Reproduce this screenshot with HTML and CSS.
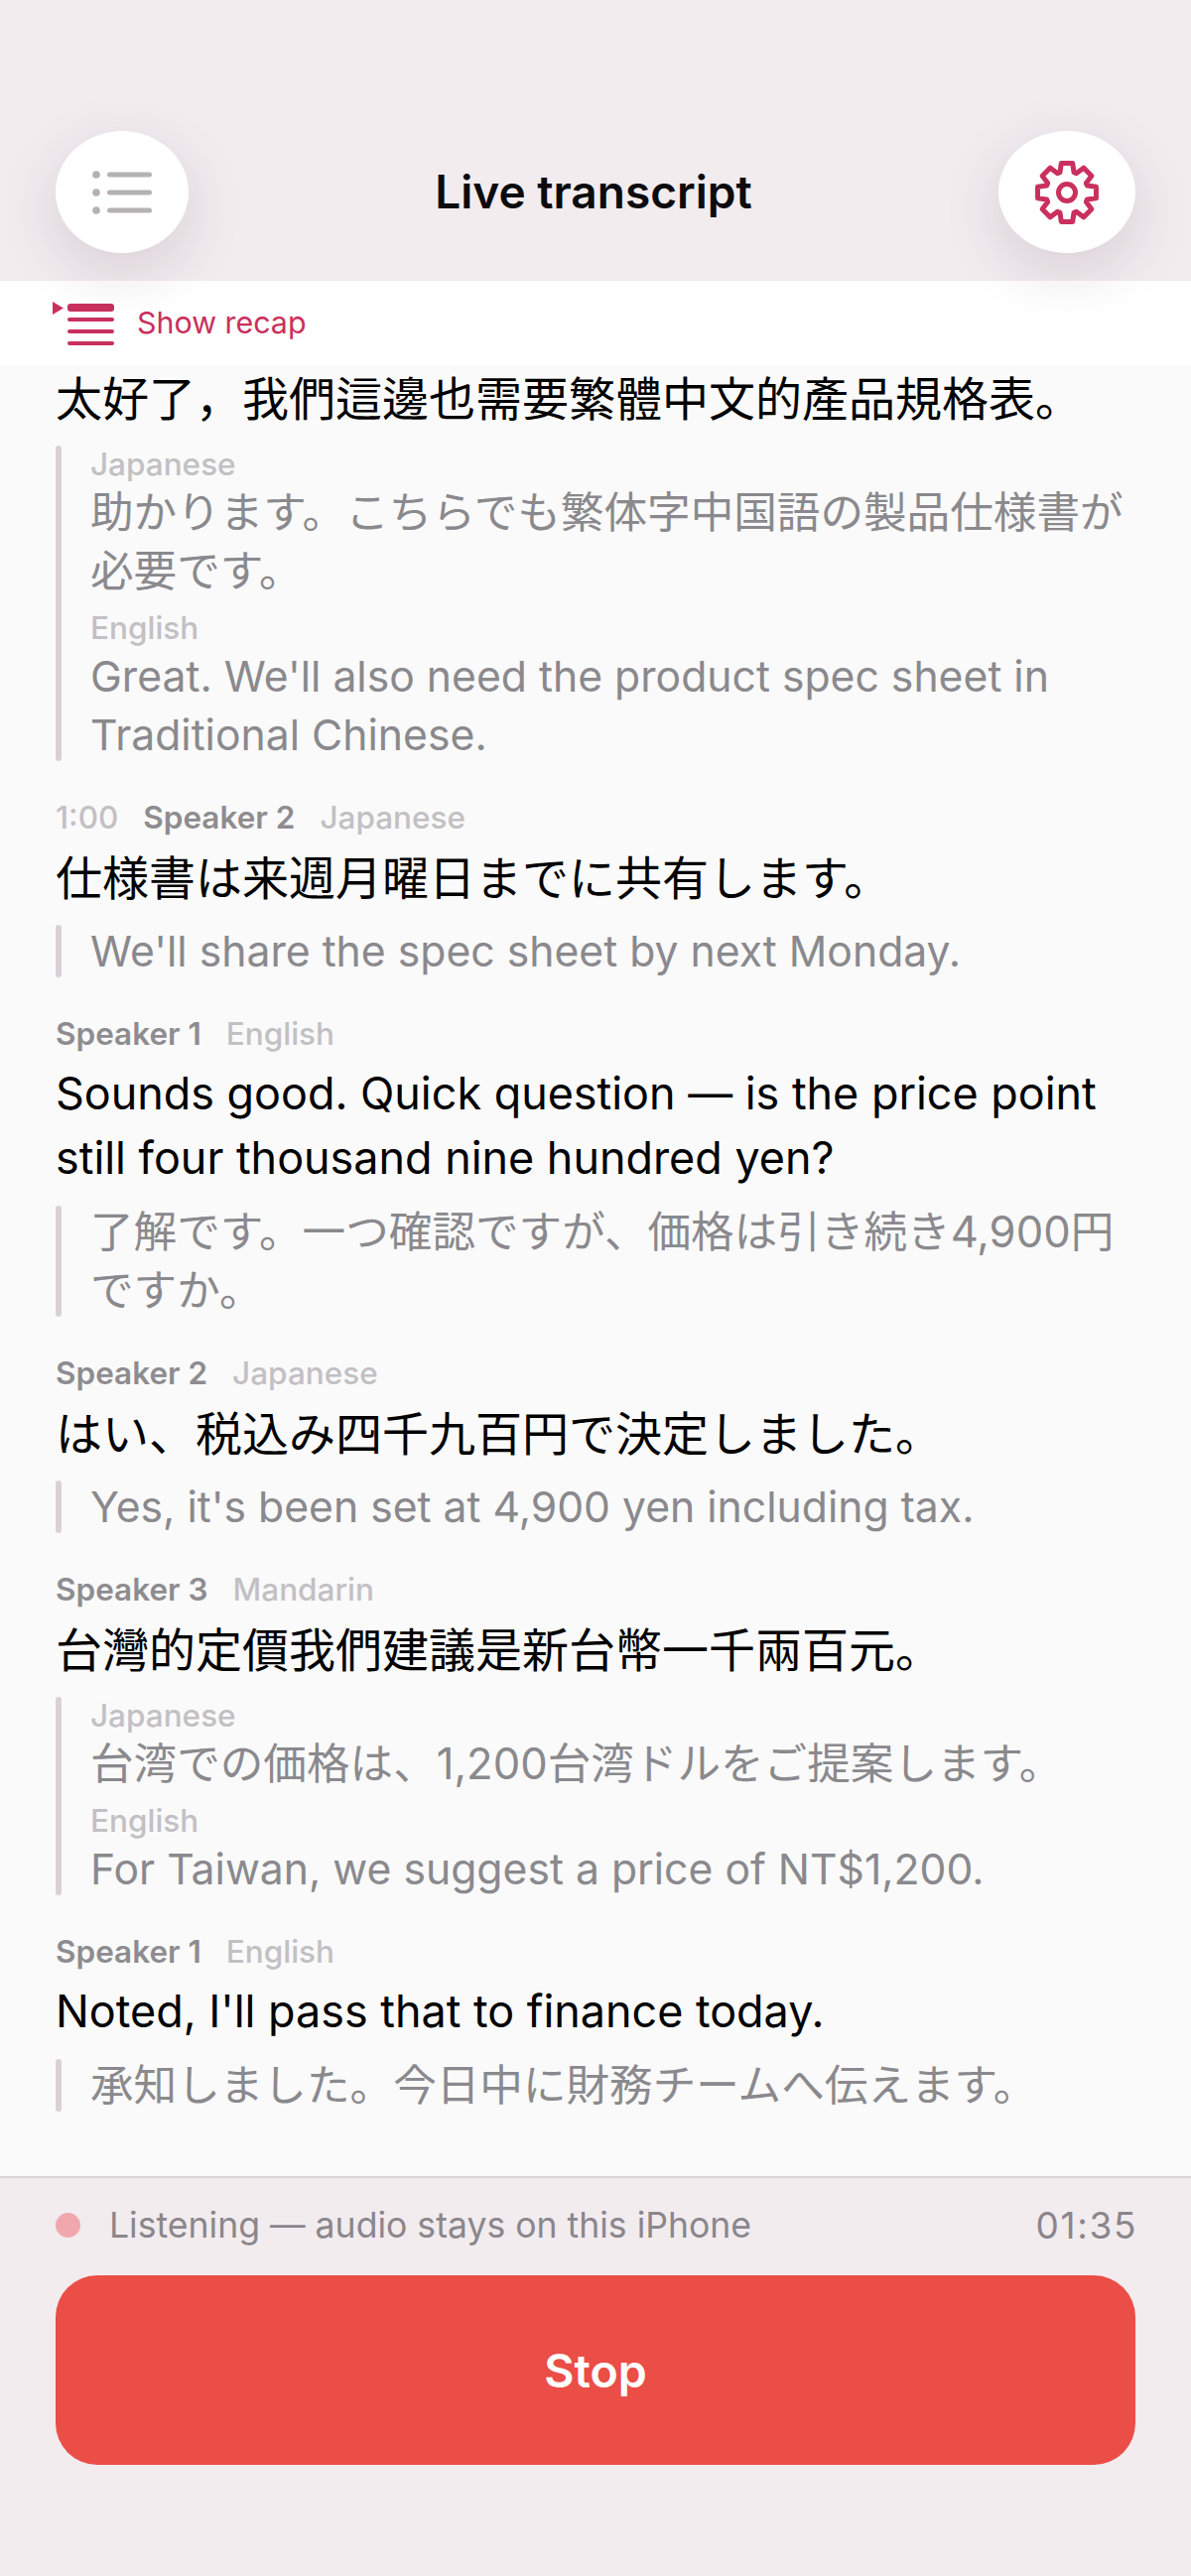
FILE: index.html
```html
<!DOCTYPE html>
<html lang="en">
<head>
    <meta charset="UTF-8">
    <meta name="viewport" content="width=device-width, initial-scale=1.0">
    <title>Live transcript</title>
    <link rel="stylesheet" href="styles.css">
</head>
<body>

    <header class="top-bar">
        <button class="round-button" aria-label="Sessions">
            <svg class="list-icon" viewBox="0 0 60 46" width="60" height="46">
                <circle cx="4" cy="5" r="3.8"/>
                <circle cx="4" cy="23" r="3.8"/>
                <circle cx="4" cy="41" r="3.8"/>
                <rect x="15" y="2.5" width="45" height="5" rx="2.5"/>
                <rect x="15" y="20.5" width="45" height="5" rx="2.5"/>
                <rect x="15" y="38.5" width="45" height="5" rx="2.5"/>
            </svg>
        </button>
        <h1>Live transcript</h1>
        <button class="round-button settings" aria-label="Settings">
            <svg class="gear-icon" viewBox="0 0 66 66" width="66" height="66">
                <path d="M26 12.67 27.28 3.55H38.72L40 12.67 42.43 13.67 49.78 8.13 57.87 16.22 52.33 23.57 53.33 26 62.45 27.28V38.72L53.33 40 52.33 42.43 57.87 49.78 49.78 57.87 42.43 52.33 40 53.33 38.72 62.45H27.28L26 53.33 23.57 52.33 16.22 57.87 8.13 49.78 13.67 42.43 12.67 40 3.55 38.72V27.28L12.67 26 13.67 23.57 8.13 16.22 16.22 8.13 23.57 13.67Z"/>
                <circle cx="33" cy="33" r="8.500"/>
            </svg>
        </button>
    </header>

    <div class="recap-bar">
        <svg class="recap-icon" viewBox="0 0 64 48" width="64" height="48">
            <polygon points="0,3 11,9.500 0,16"/>
            <rect x="15" y="5" width="47" height="8" rx="3"/>
            <rect x="15" y="19" width="47" height="4" rx="2"/>
            <rect x="15" y="31" width="47" height="4" rx="2"/>
            <rect x="15" y="43" width="47" height="4" rx="2"/>
        </svg>
        <span>Show recap</span>
    </div>

    <main class="transcript">
        <section class="entry first">
            <p class="line">太好了，我們這邊也需要繁體中文的產品規格表。</p>
            <div class="translation">
                <div class="translation-text">
                    <div class="translation-lang">Japanese</div>
                    <p>助かります。こちらでも繁体字中国語の製品仕様書が必要です。</p>
                    <div class="translation-lang">English</div>
                    <p class="latin">Great. We'll also need the product spec sheet in Traditional Chinese.</p>
                </div>
            </div>
        </section>

        <section class="entry">
            <div class="meta"><span class="time">1:00</span><span class="speaker">Speaker 2</span><span class="lang">Japanese</span></div>
            <p class="line">仕様書は来週月曜日までに共有します。</p>
            <div class="translation">
                <div class="translation-text"><p class="latin">We'll share the spec sheet by next Monday.</p></div>
            </div>
        </section>

        <section class="entry">
            <div class="meta"><span class="speaker">Speaker 1</span><span class="lang">English</span></div>
            <p class="line latin">Sounds good. Quick question — is the price point still four thousand nine hundred yen?</p>
            <div class="translation">
                <div class="translation-text"><p>了解です。一つ確認ですが、価格は引き続き4,900円ですか。</p></div>
            </div>
        </section>

        <section class="entry">
            <div class="meta"><span class="speaker">Speaker 2</span><span class="lang">Japanese</span></div>
            <p class="line">はい、税込み四千九百円で決定しました。</p>
            <div class="translation">
                <div class="translation-text"><p class="latin">Yes, it's been set at 4,900 yen including tax.</p></div>
            </div>
        </section>

        <section class="entry">
            <div class="meta"><span class="speaker">Speaker 3</span><span class="lang">Mandarin</span></div>
            <p class="line">台灣的定價我們建議是新台幣一千兩百元。</p>
            <div class="translation">
                <div class="translation-text">
                    <div class="translation-lang">Japanese</div>
                    <p>台湾での価格は、1,200台湾ドルをご提案します。</p>
                    <div class="translation-lang">English</div>
                    <p class="latin">For Taiwan, we suggest a price of NT$1,200.</p>
                </div>
            </div>
        </section>

        <section class="entry">
            <div class="meta"><span class="speaker">Speaker 1</span><span class="lang">English</span></div>
            <p class="line latin">Noted, I'll pass that to finance today.</p>
            <div class="translation">
                <div class="translation-text"><p>承知しました。今日中に財務チームへ伝えます。</p></div>
            </div>
        </section>
    </main>

    <footer class="bottom-bar">
        <div class="status">
            <span class="status-dot"></span>
            <span class="status-text">Listening — audio stays on this iPhone</span>
            <span class="status-time">01:35</span>
        </div>
        <button class="stop-button">Stop</button>
    </footer>

</body>
</html>
```

FILE: styles.css
```css
* {
    box-sizing: border-box;
}

body {
    margin: 0;
    height: 2596px;
    overflow: hidden;
    display: flex;
    flex-direction: column;
    background-color: #f2ecef;
    color: #000;
    font-family: Inter, "Noto Sans CJK JP", sans-serif;
}

p {
    margin: 0;
}

/* top bar */
.top-bar {
    position: relative;
    z-index: 2;
    height: 283px;
    padding: 132px 56px 28px;
    display: flex;
    justify-content: space-between;
    align-items: flex-start;
    flex-shrink: 0;
}

.top-bar h1 {
    margin: 0;
    line-height: 123px;
    font-size: 46px;
    font-weight: 600;
    color: #0c0c0e;
}

.round-button {
    width: 134px;
    height: 123px;
    padding: 0;
    border: none;
    border-radius: 50%;
    background-color: #fff;
    box-shadow: 0 18px 60px rgba(60, 30, 50, 0.14);
    display: flex;
    justify-content: center;
    align-items: center;
}

.round-button.settings {
    width: 138px;
}

.list-icon {
    fill: #b5b1b5;
}

.gear-icon {
    fill: none;
    stroke: #c9305e;
    stroke-width: 5;
    stroke-linejoin: round;
}

/* recap strip */
.recap-bar {
    height: 85px;
    padding: 18px 0 0 53px;
    display: flex;
    align-items: flex-start;
    gap: 21px;
    flex-shrink: 0;
    background-color: #fff;
    color: #c9305e;
    font-size: 30.4px;
    line-height: 48px;
}

.recap-icon {
    fill: #c9305e;
    flex-shrink: 0;
}

/* transcript */
.transcript {
    flex: 1;
    overflow: hidden;
    padding: 0 56px;
    background-color: #fafafa;
    border-bottom: 2px solid #d8d3d7;
}

.entry {
    margin-bottom: 37px;
}

.entry.first {
    padding-top: 1px;
}

.meta {
    display: flex;
    gap: 25px;
    height: 40px;
    line-height: 40px;
    font-size: 31.5px;
}

.time,
.lang {
    color: #c2c0c4;
    font-weight: 500;
}

.speaker {
    color: #8e8c90;
    font-weight: 600;
}

.line {
    font-size: 47px;
    line-height: 65px;
}

.line.latin {
    font-size: 44.9px;
}

.meta + .line {
    margin-top: 8px;
}

.translation {
    display: flex;
    gap: 29px;
    margin-top: 15px;
}

/* the bar has to stretch with however many lines sit next to it */
.translation::before {
    content: "";
    flex-shrink: 0;
    width: 6px;
    border-radius: 3px;
    background-color: #dad0d7;
}

.translation-text {
    flex: 1;
    font-size: 43.6px;
    line-height: 59px;
    color: #8a898d;
}

.translation-text .latin {
    font-size: 42.7px;
}

.translation-text p:first-child {
    margin-top: -3px;
}

.translation-text p:last-child {
    margin-bottom: -3px;
}

.translation-lang {
    height: 38px;
    line-height: 38px;
    font-size: 31.5px;
    font-weight: 500;
    color: #c2c0c4;
}

.translation-text p + .translation-lang {
    margin-top: 9px;
}

/* status row and stop button */
.bottom-bar {
    height: 401px;
    padding: 26px 56px 0;
    flex-shrink: 0;
}

.status {
    display: flex;
    align-items: center;
    height: 42px;
    font-size: 35.6px;
    color: #8b868c;
}

.status-dot {
    width: 25px;
    height: 25px;
    margin-right: 29px;
    border-radius: 50%;
    background-color: #f0a8ae;
}

.status-text {
    flex: 1;
}

.status-time {
    font-size: 37px;
    letter-spacing: 1.6px;
    margin-right: -2px;
}

.stop-button {
    display: block;
    width: 100%;
    height: 191px;
    margin-top: 30px;
    border: none;
    border-radius: 42px;
    background-color: #eb4d47;
    color: #fff;
    font-family: inherit;
    font-size: 46.5px;
    font-weight: 600;
}
```
